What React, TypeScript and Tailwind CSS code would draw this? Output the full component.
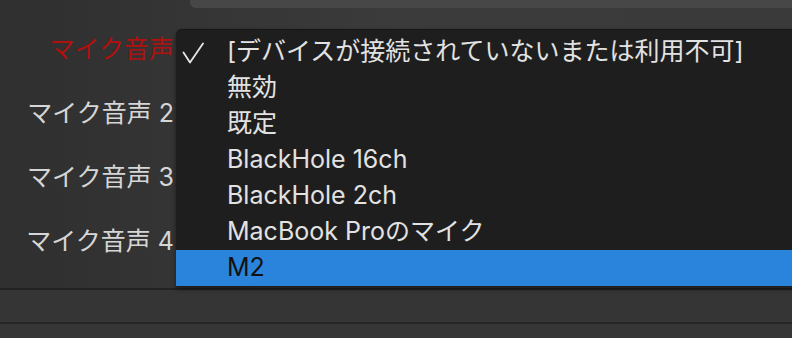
const labels = [
  { text: 'マイク音声', active: true },
  { text: 'マイク音声 2', active: false },
  { text: 'マイク音声 3', active: false },
  { text: 'マイク音声 4', active: false },
];

const options = [
  '[デバイスが接続されていないまたは利用不可]',
  '無効',
  '既定',
  'BlackHole 16ch',
  'BlackHole 2ch',
  'MacBook Proのマイク',
  'M2',
];

const font = { fontFamily: 'Inter, "Noto Sans CJK JP", sans-serif' };

export default function App() {
  return (
    <div
      className="relative w-[792px] h-[338px] overflow-hidden bg-gradient-to-r from-[#2f2f2f] via-[#3b3b3b] to-[#3a3a3a]"
      style={font}
    >
      {/* top field edge */}
      <div className="ml-[190px] h-2 bg-[#474747] rounded-bl-md" />

      {/* labels column */}
      <div className="flex flex-col pt-[10px] w-[174px]">
        {labels.map((l) => (
          <div
            key={l.text}
            className={`h-16 flex items-center justify-end text-[25px] ${l.active ? 'text-[#b0100e]' : 'text-[#d6d6d6]'}`}
          >
            {l.text}
          </div>
        ))}
      </div>

      {/* bottom bars */}
      <div className="mt-[14px] border-t-2 border-[#232323] h-[34px] bg-[#353535]" />
      <div className="border-t-2 border-[#262626] h-[20px] bg-[#363636]" />

      {/* popup menu */}
      <div className="absolute left-[176px] top-[29px] w-[620px] h-[258px] bg-[#1e1e1e] border-t border-[#161616] rounded-tl-md pt-[4px] shadow-[0_2px_4px_rgba(0,0,0,0.5)]">
        {options.map((o, i) => (
          <div
            key={o}
            className={`h-9 flex items-center text-[25px] ${i === 6 ? 'bg-[#2b84db] text-[#111]' : 'text-[#e2e2e2]'}`}
          >
            <div className="w-[51px] flex items-center pl-[6px]">
              {i === 0 && (
                <svg width="22" height="22" viewBox="0 0 22 22" fill="none" className="mt-[2px]">
                  <path d="M1.5 10.5 L8 20.5 L21 1.5" stroke="#e6e6e6" strokeWidth="1.8" strokeLinecap="round" strokeLinejoin="round" />
                </svg>
              )}
            </div>
            <span>{o}</span>
          </div>
        ))}
      </div>
    </div>
  );
}
